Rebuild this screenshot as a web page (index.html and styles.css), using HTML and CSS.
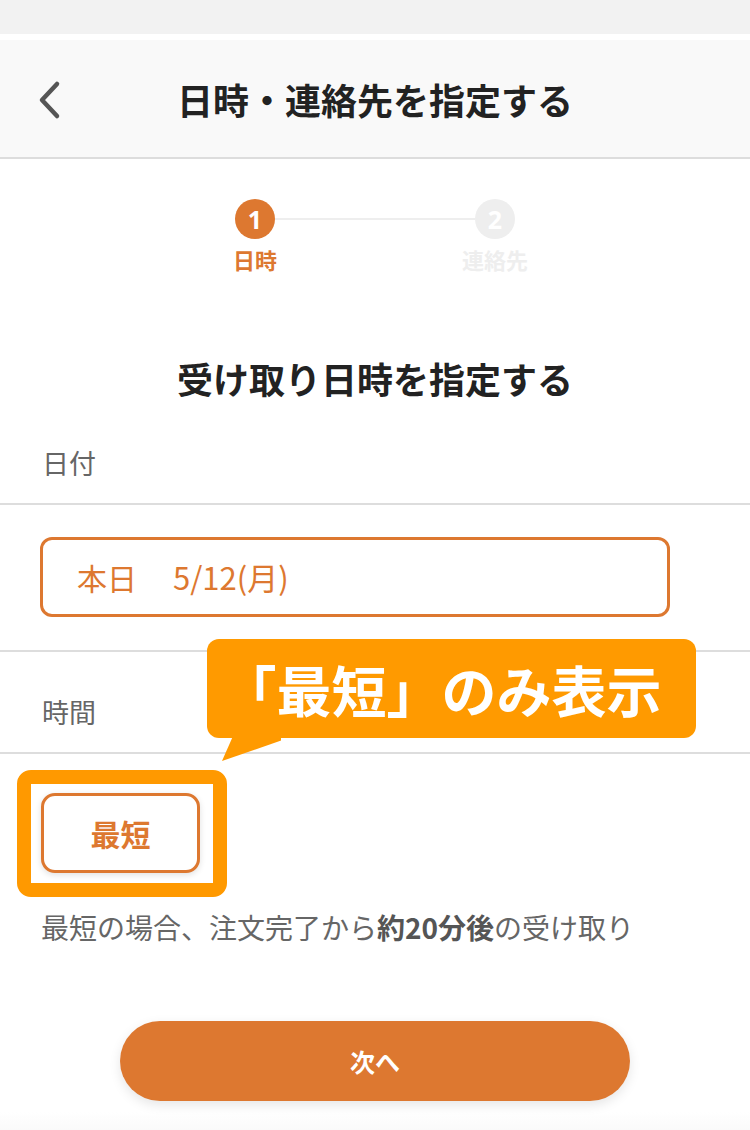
FILE: index.html
```html
<!DOCTYPE html>
<html lang="ja">
<head>
    <meta charset="UTF-8">
    <meta name="viewport" content="width=device-width, initial-scale=1.0">
    <title>日時・連絡先を指定する</title>
    <link rel="stylesheet" href="styles.css">
</head>
<body>
    <div class="status-bar"></div>

    <div class="page">
        <div class="app-header">
            <svg class="back-icon" width="24" height="40" viewBox="0 0 24 40">
                <path d="M19 4 L4 20 L19 36" fill="none" stroke="#555" stroke-width="4.5" stroke-linecap="round" stroke-linejoin="round"/>
            </svg>
            <h1>日時・連絡先を指定する</h1>
        </div>

        <div class="stepper">
            <div class="step active">
                <span class="step-num">1</span>
                <span class="step-label">日時</span>
            </div>
            <div class="step-line"></div>
            <div class="step">
                <span class="step-num">2</span>
                <span class="step-label">連絡先</span>
            </div>
        </div>

        <h2 class="section-title">受け取り日時を指定する</h2>

        <div class="field-label">日付</div>
        <div class="field-body">
            <div class="date-select"><span>本日</span><span class="date-value">5/12(月)</span></div>
        </div>

        <div class="field-label">時間</div>
        <div class="time-body">
            <div class="highlight-frame">
                <button class="time-btn">最短</button>
            </div>
            <p class="note">最短の場合、注文完了から<b>約20分後</b>の受け取り</p>
        </div>

        <div class="callout">「最短」のみ表示</div>

        <div class="footer">
            <button class="next-btn">次へ</button>
        </div>
    </div>
</body>
</html>
```

FILE: styles.css
```css
/* page base */
body {
    margin: 0;
    font-family: "Noto Sans CJK JP", "Noto Sans", sans-serif;
    background-color: #fff;
    color: #222;
}

.status-bar {
    height: 34px;
    background-color: #f2f2f2;
    margin-bottom: 6px;
}

.page {
    position: relative;
}

.app-header {
    position: relative;
    height: 117px;
    background-color: #f9f9f9;
    border-bottom: 2px solid #ddd;
    display: flex;
    align-items: center;
    justify-content: center;
}

.back-icon {
    position: absolute;
    left: 38px;
    top: 40px;
}

.app-header h1 {
    margin: 0;
    font-size: 36px;
    font-weight: bold;
    color: #222;
}

/* stepper */
.stepper {
    display: flex;
    justify-content: center;
    align-items: flex-start;
    padding-top: 40px;
}

.step {
    width: 80px;
    display: flex;
    flex-direction: column;
    align-items: center;
}

.step-num {
    width: 40px;
    height: 40px;
    border-radius: 50%;
    background-color: #eee;
    color: #fff;
    font-size: 25px;
    font-weight: bold;
    line-height: 40px;
    text-align: center;
    font-family: "Open Sans", "Noto Sans", sans-serif;
}

.step-label {
    margin-top: 5px;
    font-size: 22px;
    font-weight: bold;
    line-height: 30px;
    color: #eee;
}

.step.active .step-num {
    background-color: #dd7830;
}

.step.active .step-label {
    color: #dd7830;
}

.step-line {
    width: 200px;
    height: 2px;
    margin: 19px -20px 0;
    background-color: #eee;
}

.section-title {
    margin: 79px 0 0;
    font-size: 36px;
    line-height: 50px;
    text-align: center;
    font-weight: bold;
    color: #222;
}

/* form rows */
.field-label {
    padding: 40px 42px 21px;
    font-size: 27px;
    line-height: 39px;
    color: #666;
    border-bottom: 2px solid #ddd;
}

.field-body {
    padding: 32px 80px 33px 40px;
    border-bottom: 2px solid #ddd;
}

.date-select {
    height: 74px;
    border: 3px solid #dd7830;
    border-radius: 12px;
    padding-left: 34px;
    font-size: 30px;
    line-height: 74px;
    color: #dd7830;
}

.date-value {
    margin-left: 36px;
    font-size: 31px;
}

.time-body {
    padding: 16px 0 0 17px;
}

.highlight-frame {
    display: inline-block;
    border: 14px solid #ff9900;
    border-radius: 14px;
    padding: 9px 13px 10px 10px;
}

.time-btn {
    display: block;
    width: 159px;
    height: 80px;
    border: 3px solid #dd7830;
    border-radius: 14px;
    background-color: #fff;
    color: #dd7830;
    font-family: inherit;
    font-size: 30px;
    font-weight: bold;
    box-shadow: 0 2px 6px rgba(0, 0, 0, 0.12);
}

.note {
    margin: 10px 0 0 24px;
    font-size: 28px;
    line-height: 40px;
    color: #666;
}

.note b {
    color: #555;
}

/* annotation bubble */
.callout {
    position: absolute;
    left: 207px;
    top: 599px;
    width: 469px;
    height: 99px;
    padding-right: 20px;
    border-radius: 12px;
    background-color: #ff9a00;
    color: #fff;
    font-size: 55px;
    font-weight: bold;
    line-height: 99px;
    text-align: center;
}

.callout::after {
    content: "";
    position: absolute;
    left: 14px;
    top: 97px;
    width: 60px;
    height: 26px;
    background-color: #ff9a00;
    clip-path: polygon(12px 0, 73px 0, 1px 25px);
}

/* footer */
.footer {
    display: flex;
    justify-content: center;
    padding: 74px 0 40px;
    background: linear-gradient(to bottom, #fff 85%, #f7f7f7);
}

.next-btn {
    width: 510px;
    height: 80px;
    border: none;
    border-radius: 40px;
    background-color: #dd7830;
    color: #fff;
    font-family: inherit;
    font-size: 25px;
    font-weight: bold;
    box-shadow: 0 4px 12px rgba(0, 0, 0, 0.1);
}
```
